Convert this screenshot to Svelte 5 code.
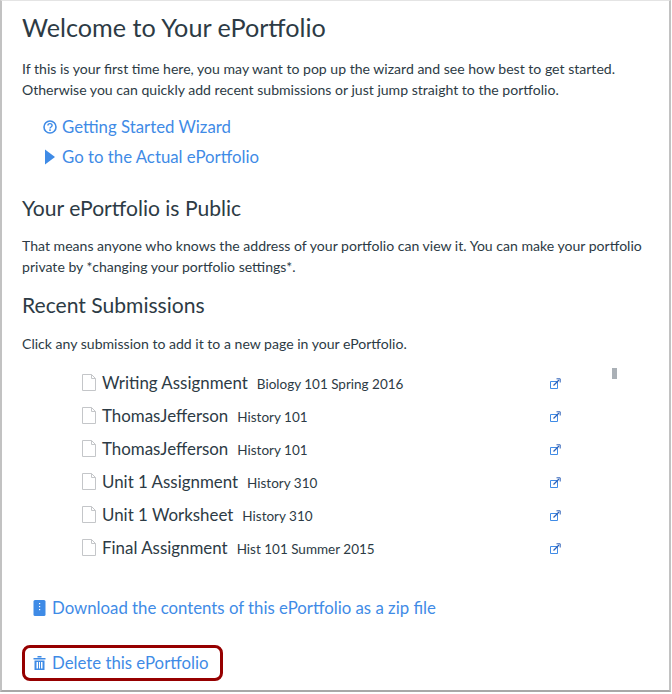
<script>
    const submissions = [
        { title: 'Writing Assignment', course: 'Biology 101 Spring 2016' },
        { title: 'ThomasJefferson', course: 'History 101' },
        { title: 'ThomasJefferson', course: 'History 101' },
        { title: 'Unit 1 Assignment', course: 'History 310' },
        { title: 'Unit 1 Worksheet', course: 'History 310' },
        { title: 'Final Assignment', course: 'Hist 101 Summer 2015' }
    ];
</script>

<main class="frame">
    <h1>Welcome to Your ePortfolio</h1>
    <p class="intro">If this is your first time here, you may want to pop up the wizard and see how best to get started. Otherwise you can quickly add recent submissions or just jump straight to the portfolio.</p>

    <ul class="wizard-links">
        <li>
            <svg width="14" height="14" viewBox="0 0 14 14" fill="none">
                <circle cx="7" cy="7" r="6" stroke="#3f8be6" stroke-width="1.600" />
                <path d="M4.900 5.600c0-1.300 1-2 2.100-2s2.100 .7 2.100 1.900c0 1.500-2.100 1.500-2.100 3" stroke="#3f8be6" stroke-width="1.400" />
                <rect x="6.200" y="9.300" width="1.600" height="1.600" fill="#3f8be6" />
            </svg>
            <span>Getting Started Wizard</span>
        </li>
        <li>
            <svg width="14" height="16" viewBox="0 0 14 16"><path d="M2 .5 L12 8 L2 15.500 Z" fill="#3f8be6" /></svg>
            <span>Go to the Actual ePortfolio</span>
        </li>
    </ul>

    <h2 class="public">Your ePortfolio is Public</h2>
    <p>That means anyone who knows the address of your portfolio can view it. You can make your portfolio private by *changing your portfolio settings*.</p>

    <h2 class="recent">Recent Submissions</h2>
    <p>Click any submission to add it to a new page in your ePortfolio.</p>

    <div class="submissions">
        <ul>
            {#each submissions as item}
                <li>
                    <svg class="doc" width="16" height="17" viewBox="0 0 16 17" fill="none">
                        <path d="M.5 .5H9.500L13.500 4.500V16.500H.5Z" stroke="#c4c6c9" />
                        <path d="M9.500 .5V4.500H13.500" stroke="#c4c6c9" />
                    </svg>
                    <span class="title">{item.title}</span>
                    <span class="course">{item.course}</span>
                    <svg class="external" width="11" height="11" viewBox="0 0 11 11" fill="none">
                        <path d="M7.500 3.500H.5V10.500H7.500Z" stroke="#3f8be6" />
                        <path d="M3.500 7.500L9 2" stroke="#2f62b8" stroke-width="1.200" />
                        <path d="M6.500 .8H10.200V4.500" stroke="#2f62b8" />
                    </svg>
                </li>
            {/each}
        </ul>
        <div class="scrollbar"></div>
    </div>

    <div class="action download">
        <svg width="13" height="16" viewBox="0 0 13 16">
            <rect x="0.500" width="12" height="16" rx="1.500" fill="#3f8be6" />
            <rect x="6" y="3" width="1.200" height="1.200" fill="#fff" />
            <rect x="6" y="6" width="1.200" height="1.200" fill="#fff" />
            <rect x="6" y="9" width="1.200" height="1.200" fill="#fff" />
        </svg>
        <span>Download the contents of this ePortfolio as a zip file</span>
    </div>

    <div class="action delete">
        <svg width="13" height="14" viewBox="0 0 13 14" fill="#3f8be6">
            <rect x="0.500" y="2" width="12" height="1.500" />
            <rect x="4.500" y="0" width="4" height="1.500" />
            <path d="M1.500 4.500H11.500V14H1.500ZM3.500 6V12.500H5V6ZM6 6V12.500H7V6ZM8 6V12.500H9.500V6Z" fill-rule="evenodd" />
        </svg>
        <span>Delete this ePortfolio</span>
    </div>
</main>

<style>
    :global(body) {
        margin: 0;
        background: #ffffff;
    }

    .frame {
        box-sizing: border-box;
        width: 671px;
        height: 692px;
        padding: 0 20px 0 20px;
        border-left: 2px solid #c2c2c2;
        border-right: 2px solid #c2c2c2;
        border-bottom: 2px solid #a8a8a8;
        border-top: 1px solid #e4e4e4;
        font-family: Lato, sans-serif;
        color: #2d3b45;
        overflow: hidden;
    }

    h1 {
        margin: 10px 0 0;
        font-size: 25.2px;
        line-height: 32px;
        font-weight: 400;
    }

    h2 {
        margin: 0;
        font-size: 21.1px;
        line-height: 28px;
        font-weight: 400;
    }

    p {
        margin: 0;
        font-size: 14.07px;
        line-height: 21px;
    }

    .intro {
        margin-top: 15px;
    }

    ul {
        list-style: none;
        margin: 0;
        padding: 0;
    }

    .wizard-links {
        margin: 12px 0 0 21px;
        color: #3f8be6;
        font-size: 16.8px;
        line-height: 30px;
    }

    .wizard-links li {
        display: flex;
        align-items: center;
        gap: 5px;
    }

    .public {
        margin-top: 22px;
        margin-bottom: 13px;
    }

    .recent {
        margin-top: 14px;
        margin-bottom: 14px;
    }

    .submissions {
        position: relative;
        margin: 13px 0 0 60px;
        width: 535px;
    }

    .submissions li {
        display: flex;
        align-items: center;
        height: 33px;
    }

    .doc {
        margin-right: 4px;
        margin-bottom: 2px;
        flex: none;
    }

    .title {
        font-size: 16.9px;
        margin-right: 9px;
        margin-bottom: 2px;
    }

    .course {
        font-size: 13.5px;
    }

    .external {
        margin-left: auto;
        margin-right: 56px;
    }

    .scrollbar {
        position: absolute;
        right: 0;
        top: 1px;
        width: 5px;
        height: 11px;
        background: #aab0b6;
    }

    .action {
        display: inline-flex;
        align-items: center;
        gap: 6px;
        color: #3f8be6;
        font-size: 16.8px;
        line-height: 24px;
    }

    .download {
        display: flex;
        margin: 31px 0 0 11px;
    }

    .delete {
        box-sizing: border-box;
        margin-top: 25px;
        padding: 2px 11px 2px 8px;
        border: 3px solid #960000;
        border-radius: 8px;
        height: 36px;
    }
</style>
